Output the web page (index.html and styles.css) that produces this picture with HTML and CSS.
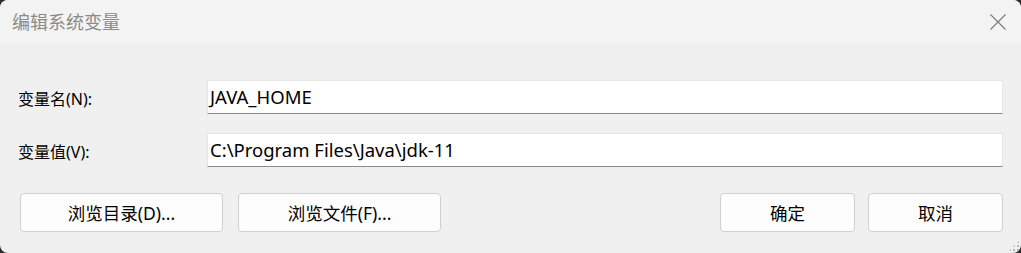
FILE: index.html
```html
<!DOCTYPE html>
<html lang="zh-CN">
<head>
<meta charset="utf-8">
<title>编辑系统变量</title>
<link rel="stylesheet" href="styles.css">
</head>
<body>
<div class="window">
  <div class="titlebar">
    <span class="title">编辑系统变量</span>
    <svg class="close" width="16" height="16" viewBox="0 0 16 16"><path d="M0.5 0.5 L15.5 15.5 M15.5 0.5 L0.5 15.5" stroke="#7a7a7a" stroke-width="1.1" fill="none"/></svg>
  </div>
  <div class="content">
    <div class="row">
      <label class="label">变量名(N):</label>
      <div class="field">JAVA_HOME</div>
    </div>
    <div class="row row2">
      <label class="label">变量值(V):</label>
      <div class="field">C:\Program Files\Java\jdk-11</div>
    </div>
    <div class="buttons">
      <div class="left">
        <button class="btn wide">浏览目录(D)...</button>
        <button class="btn wide">浏览文件(F)...</button>
      </div>
      <div class="right">
        <button class="btn narrow">确定</button>
        <button class="btn narrow">取消</button>
      </div>
    </div>
  </div>
  <div class="grip"></div>
</div>
</body>
</html>
```
FILE: styles.css
```css
html, body {
  margin: 0;
  padding: 0;
  width: 1021px;
  height: 253px;
  background: #2b2b2b;
  overflow: hidden;
}
.window {
  position: relative;
  width: 1021px;
  height: 253px;
  background: #f0f0f0;
  border-radius: 8px;
  overflow: hidden;
  font-family: "Noto Sans", "Noto Sans CJK SC", sans-serif;
  color: #000;
}
.titlebar {
  height: 43px;
  background: #f3f3f3;
  display: flex;
  align-items: center;
  justify-content: space-between;
  padding: 0 15px 0 12px;
}
.title {
  font-size: 18px;
  color: #8a8a8a;
  margin-top: -2px;
}
.content {
  padding: 37px 18px 0 18px;
}
.row {
  display: flex;
  align-items: center;
  height: 34px;
}
.row2 {
  margin-top: 19px;
}
.label {
  width: 189px;
  font-size: 16px;
  margin-top: 2px;
}
.field {
  box-sizing: border-box;
  width: 796px;
  height: 34px;
  background: #fff;
  border: 1px solid #e6e6e6;
  border-bottom: 1px solid #8a8a8a;
  font-size: 18.5px;
  padding: 0 0 0 2px;
  line-height: 31px;
}
.buttons {
  display: flex;
  justify-content: space-between;
  margin-top: 26px;
  padding-left: 2px;
}
.left, .right {
  display: flex;
}
.left { gap: 15px; }
.right { gap: 13px; }
.btn {
  box-sizing: border-box;
  height: 39px;
  background: #fdfdfd;
  border: 1px solid #d0d0d0;
  border-radius: 4px;
  font-family: "Noto Sans", "Noto Sans CJK SC", sans-serif;
  font-size: 17.5px;
  color: #000;
  padding: 0;
}
.wide { width: 203px; }
.narrow { width: 135px; }
.grip {
  position: absolute;
  right: 1px;
  bottom: 1px;
  width: 12px;
  height: 12px;
  background-image: radial-gradient(circle, #b8b8b8 1px, transparent 1.2px);
  background-size: 4px 4px;
  clip-path: polygon(100% 0, 100% 100%, 0 100%);
}
```
